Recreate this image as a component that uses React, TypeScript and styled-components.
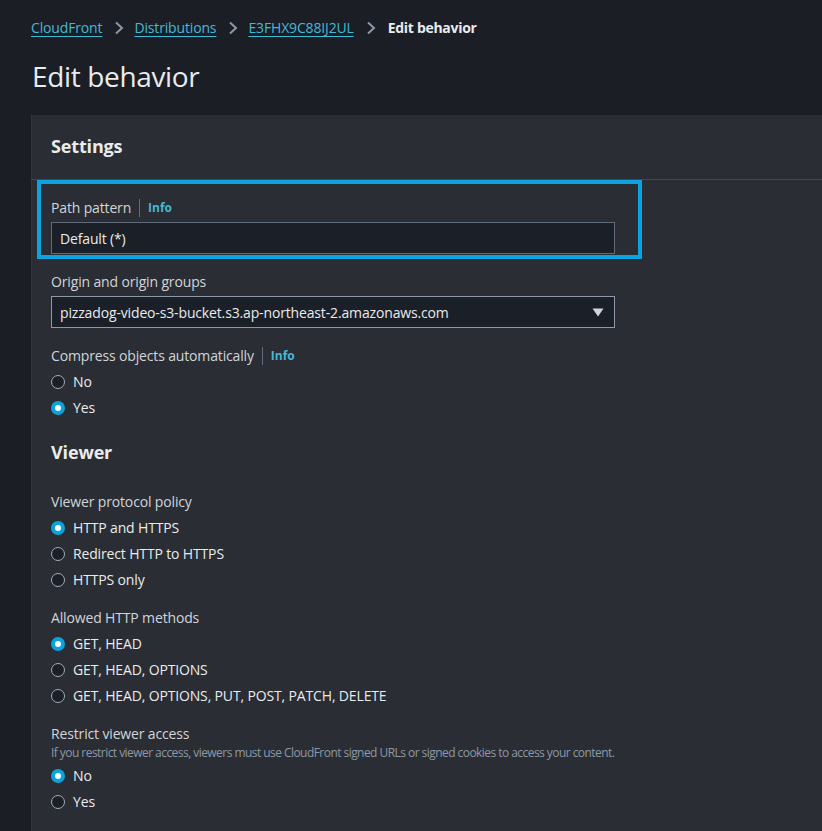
import React from "react";
import styled, { createGlobalStyle } from "styled-components";

const GlobalStyle = createGlobalStyle`
  html, body { margin: 0; padding: 0; }
  body {
    background: #1b1e25;
    font-family: "Open Sans", "Noto Sans", "Liberation Sans", sans-serif;
    color: #d1d5db;
    letter-spacing: -0.15px;
    overflow: hidden;
  }
`;

const Page = styled.div`
  padding-left: 31px;
  min-height: 831px;
  display: flex;
  flex-direction: column;
`;

const Breadcrumbs = styled.nav`
  display: flex;
  align-items: center;
  margin-top: 18px;
  height: 20px;
  font-size: 14px;
  line-height: 20px;
`;

const Crumb = styled.a`
  color: #44b9d6;
  text-decoration: underline;
  text-underline-offset: 3px;
  text-decoration-thickness: 1px;
`;

const Current = styled.span`
  color: #e9ebed;
  font-weight: 700;
  letter-spacing: -0.3px;
  margin-left: 2px;
`;

const Chevron = styled.svg`
  width: 10px;
  height: 14px;
  margin: 0 10px 0 12px;
  flex: none;
`;

const Title = styled.h1`
  margin: 20px 0 0 1px;
  font-size: 28px;
  line-height: 36px;
  font-weight: 400;
  letter-spacing: -0.35px;
  color: #e9ebed;
`;

const Panel = styled.section`
  margin-top: 21px;
  background: #2a2d33;
  flex: 1;
  box-shadow: inset 1px 0 0 #30343b;
`;

const PanelHeader = styled.div`
  padding: 19px 20px 21px;
  border-bottom: 1px solid #42464e;
`;

const SectionTitle = styled.h2<{ $top?: number }>`
  margin: ${(p) => p.$top ?? 0}px 0 0;
  font-size: 18px;
  line-height: 24px;
  font-weight: 700;
  color: #e9ebed;
`;

const PanelBody = styled.div`
  padding: 17px 20px 40px;
  display: flex;
  flex-direction: column;
`;

const Stack = styled.div<{ $top?: number }>`
  display: flex;
  flex-direction: column;
  gap: 17px;
  margin-top: ${(p) => p.$top ?? 0}px;
`;

const Field = styled.div<{ $highlight?: boolean }>`
  position: relative;
  display: flex;
  flex-direction: column;
  ${(p) =>
    p.$highlight &&
    `
    &::after {
      content: "";
      position: absolute;
      left: -14px;
      top: -17px;
      width: 597px;
      height: 71px;
      border: 4px solid #0aa3e0;
      pointer-events: none;
    }
  `}
`;

const LabelRow = styled.div`
  display: flex;
  align-items: center;
  height: 20px;
  padding-top: 1px;
  font-size: 14px;
  line-height: 20px;
  color: #d1d5db;
`;

const Divider = styled.span`
  width: 1px;
  height: 18px;
  background: #5f6b7a;
  margin: 0 8px;
`;

const Info = styled.a`
  color: #44b9d6;
  font-size: 12px;
  font-weight: 700;
  letter-spacing: 0;
`;

const Description = styled.div`
  font-size: 12px;
  line-height: 18px;
  letter-spacing: -0.55px;
  color: #8d99a8;
`;

const Input = styled.div`
  margin-top: 4px;
  width: 564px;
  height: 32px;
  box-sizing: border-box;
  border: 1px solid #5f6b7a;
  background: #1b1f27;
  padding: 0 8px;
  display: flex;
  align-items: center;
  font-size: 14px;
  color: #e9ebed;
`;

const Select = styled(Input)`
  border-color: #8d99a8;
  justify-content: space-between;
  padding-right: 10px;
`;

const RadioList = styled.div<{ $top?: number }>`
  display: flex;
  flex-direction: column;
  gap: 6px;
  margin-top: ${(p) => p.$top ?? 6}px;
`;

const RadioRow = styled.label`
  display: flex;
  align-items: center;
  height: 20px;
  font-size: 14px;
  line-height: 20px;
  color: #e9ebed;
`;

const Circle = styled.span<{ $checked?: boolean }>`
  width: 14px;
  height: 14px;
  box-sizing: border-box;
  border-radius: 50%;
  margin: 0 8px 0 0;
  flex: none;
  background: ${(p) => (p.$checked ? "#ffffff" : "#1b1f27")};
  border: ${(p) => (p.$checked ? "4px solid #0aa3dc" : "1.5px solid #a4adb8")};
`;

const ChevronIcon = () => (
  <Chevron viewBox="0 0 10 14">
    <path d="M2 1.5 L8 7 L2 12.5" fill="none" stroke="#8d99a8" strokeWidth="2" />
  </Chevron>
);

const Caret = () => (
  <svg width="12" height="9" viewBox="0 0 12 9">
    <path d="M0.5 0.5 H11.5 L6 8.5 Z" fill="#d1d5db" />
  </svg>
);

type Opt = { label: string; checked?: boolean };

const Radios = ({ options, top }: { options: Opt[]; top?: number }) => (
  <RadioList $top={top}>
    {options.map((o) => (
      <RadioRow key={o.label}>
        <Circle $checked={o.checked} />
        {o.label}
      </RadioRow>
    ))}
  </RadioList>
);

export default function App() {
  return (
    <>
      <GlobalStyle />
      <Page>
        <Breadcrumbs>
          <Crumb>CloudFront</Crumb>
          <ChevronIcon />
          <Crumb>Distributions</Crumb>
          <ChevronIcon />
          <Crumb>E3FHX9C88IJ2UL</Crumb>
          <ChevronIcon />
          <Current>Edit behavior</Current>
        </Breadcrumbs>
        <Title>Edit behavior</Title>
        <Panel>
          <PanelHeader>
            <SectionTitle>Settings</SectionTitle>
          </PanelHeader>
          <PanelBody>
            <Stack>
              <Field $highlight>
                <LabelRow>
                  Path pattern
                  <Divider />
                  <Info>Info</Info>
                </LabelRow>
                <Input>Default (*)</Input>
              </Field>
              <Field>
                <LabelRow>Origin and origin groups</LabelRow>
                <Select>
                  pizzadog-video-s3-bucket.s3.ap-northeast-2.amazonaws.com
                  <Caret />
                </Select>
              </Field>
              <Field>
                <LabelRow>
                  Compress objects automatically
                  <Divider />
                  <Info>Info</Info>
                </LabelRow>
                <Radios options={[{ label: "No" }, { label: "Yes", checked: true }]} />
              </Field>
            </Stack>
            <SectionTitle $top={22}>Viewer</SectionTitle>
            <Stack $top={27}>
              <Field>
                <LabelRow>Viewer protocol policy</LabelRow>
                <Radios
                  options={[
                    { label: "HTTP and HTTPS", checked: true },
                    { label: "Redirect HTTP to HTTPS" },
                    { label: "HTTPS only" },
                  ]}
                />
              </Field>
              <Field>
                <LabelRow>Allowed HTTP methods</LabelRow>
                <Radios
                  options={[
                    { label: "GET, HEAD", checked: true },
                    { label: "GET, HEAD, OPTIONS" },
                    { label: "GET, HEAD, OPTIONS, PUT, POST, PATCH, DELETE" },
                  ]}
                />
              </Field>
              <Field>
                <LabelRow>Restrict viewer access</LabelRow>
                <Description>
                  If you restrict viewer access, viewers must use CloudFront signed URLs or signed cookies to access your content.
                </Description>
                <Radios top={4} options={[{ label: "No", checked: true }, { label: "Yes" }]} />
              </Field>
            </Stack>
          </PanelBody>
        </Panel>
      </Page>
    </>
  );
}
